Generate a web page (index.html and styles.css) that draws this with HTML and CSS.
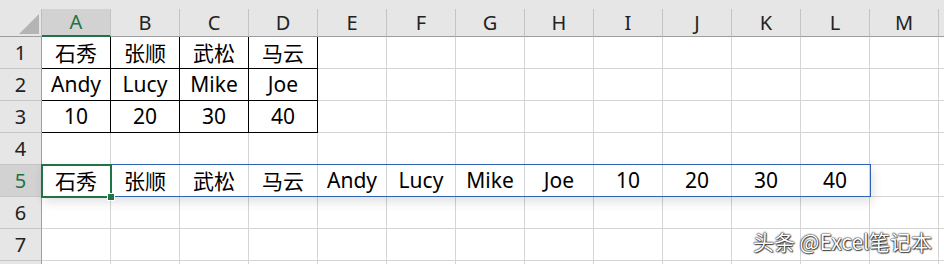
FILE: index.html
```html
<!DOCTYPE html>
<html lang="zh-CN">
<head>
    <meta charset="UTF-8">
    <title>Sheet1</title>
    <link rel="stylesheet" href="styles.css">
</head>
<body>
    <div class="window">
        <div class="sheet">
            <div class="strip"></div>

            <!-- column headers -->
            <div class="corner">
                <svg width="42" height="28" viewBox="0 0 42 28"><polygon points="39,5 39,25 19,25" fill="#b4b4b4"/></svg>
            </div>
            <div class="col-head active">A</div>
            <div class="col-head">B</div>
            <div class="col-head">C</div>
            <div class="col-head">D</div>
            <div class="col-head">E</div>
            <div class="col-head">F</div>
            <div class="col-head">G</div>
            <div class="col-head">H</div>
            <div class="col-head">I</div>
            <div class="col-head">J</div>
            <div class="col-head">K</div>
            <div class="col-head">L</div>
            <div class="col-head">M</div>
            <div class="col-head"></div>

            <!-- row 1 -->
            <div class="row-head">1</div>
            <div class="cell boxed">石秀</div>
            <div class="cell boxed">张顺</div>
            <div class="cell boxed">武松</div>
            <div class="cell boxed">马云</div>
            <div class="cell"></div><div class="cell"></div><div class="cell"></div><div class="cell"></div><div class="cell"></div>
            <div class="cell"></div><div class="cell"></div><div class="cell"></div><div class="cell"></div><div class="cell"></div>

            <!-- row 2 -->
            <div class="row-head">2</div>
            <div class="cell boxed">Andy</div>
            <div class="cell boxed">Lucy</div>
            <div class="cell boxed">Mike</div>
            <div class="cell boxed">Joe</div>
            <div class="cell"></div><div class="cell"></div><div class="cell"></div><div class="cell"></div><div class="cell"></div>
            <div class="cell"></div><div class="cell"></div><div class="cell"></div><div class="cell"></div><div class="cell"></div>

            <!-- row 3 -->
            <div class="row-head">3</div>
            <div class="cell boxed">10</div>
            <div class="cell boxed">20</div>
            <div class="cell boxed">30</div>
            <div class="cell boxed">40</div>
            <div class="cell"></div><div class="cell"></div><div class="cell"></div><div class="cell"></div><div class="cell"></div>
            <div class="cell"></div><div class="cell"></div><div class="cell"></div><div class="cell"></div><div class="cell"></div>

            <!-- row 4 -->
            <div class="row-head">4</div>
            <div class="cell"></div><div class="cell"></div><div class="cell"></div><div class="cell"></div><div class="cell"></div>
            <div class="cell"></div><div class="cell"></div><div class="cell"></div><div class="cell"></div><div class="cell"></div>
            <div class="cell"></div><div class="cell"></div><div class="cell"></div><div class="cell"></div>

            <!-- row 5 (transposed copy) -->
            <div class="row-head active">5</div>
            <div class="cell">石秀</div>
            <div class="cell">张顺</div>
            <div class="cell">武松</div>
            <div class="cell">马云</div>
            <div class="cell">Andy</div>
            <div class="cell">Lucy</div>
            <div class="cell">Mike</div>
            <div class="cell">Joe</div>
            <div class="cell">10</div>
            <div class="cell">20</div>
            <div class="cell">30</div>
            <div class="cell">40</div>
            <div class="cell"></div><div class="cell"></div>

            <!-- row 6 -->
            <div class="row-head">6</div>
            <div class="cell"></div><div class="cell"></div><div class="cell"></div><div class="cell"></div><div class="cell"></div>
            <div class="cell"></div><div class="cell"></div><div class="cell"></div><div class="cell"></div><div class="cell"></div>
            <div class="cell"></div><div class="cell"></div><div class="cell"></div><div class="cell"></div>

            <!-- row 7 -->
            <div class="row-head">7</div>
            <div class="cell"></div><div class="cell"></div><div class="cell"></div><div class="cell"></div><div class="cell"></div>
            <div class="cell"></div><div class="cell"></div><div class="cell"></div><div class="cell"></div><div class="cell"></div>
            <div class="cell"></div><div class="cell"></div><div class="cell"></div><div class="cell"></div>

            <!-- row 8, only its top edge shows -->
            <div class="row-head"></div>
            <div class="cell"></div><div class="cell"></div><div class="cell"></div><div class="cell"></div><div class="cell"></div>
            <div class="cell"></div><div class="cell"></div><div class="cell"></div><div class="cell"></div><div class="cell"></div>
            <div class="cell"></div><div class="cell"></div><div class="cell"></div><div class="cell"></div>

            <!-- overlays: pasted range and active cell -->
            <div class="paste-range"></div>
            <div class="active-cell"><span class="fill-handle"></span></div>
        </div>

        <div class="watermark">头条 @Excel笔记本</div>
    </div>
</body>
</html>
```

FILE: styles.css
```css
/* Page */
body {
    margin: 0;
    background-color: #ffffff;
    overflow: hidden;
    font-family: 'Noto Sans', 'Noto Sans CJK SC', sans-serif;
    color: #000;
}

/* Visible window onto the sheet */
.window {
    position: relative;
    width: 944px;
    height: 264px;
    overflow: hidden;
}

/* Worksheet grid */
.sheet {
    position: relative;
    display: grid;
    grid-template-columns: 42px repeat(14, 69px);
    grid-template-rows: 9px 28px repeat(8, 32px);
    width: 1008px;
}

.strip {
    grid-column: 1 / -1;
    background-color: #e6e6e6;
}

/* Headers */
.corner {
    background-color: #e6e6e6;
    border-right: 1px solid #bdbdbd;
    border-bottom: 1px solid #9d9d9d;
    box-sizing: border-box;
    line-height: 0;
}

.col-head {
    background-color: #e6e6e6;
    border-right: 1px solid #c4c4c4;
    border-bottom: 1px solid #9d9d9d;
    box-sizing: border-box;
    display: flex;
    align-items: center;
    justify-content: center;
    font-size: 20px;
    color: #222;
    padding-bottom: 1px;
}

.col-head.active {
    background-color: #d2d2d2;
    color: #217346;
    border-bottom: 2px solid #217346;
}

.row-head {
    background-color: #e6e6e6;
    border-right: 1px solid #9d9d9d;
    border-bottom: 1px solid #c4c4c4;
    box-sizing: border-box;
    display: flex;
    align-items: center;
    justify-content: center;
    font-size: 20px;
    color: #222;
}

.row-head.active {
    background-color: #d2d2d2;
    color: #217346;
}

/* Cells */
.cell {
    border-right: 1px solid #d4d4d4;
    border-bottom: 1px solid #d4d4d4;
    box-sizing: border-box;
    display: flex;
    align-items: center;
    justify-content: center;
    font-size: 21px;
    white-space: nowrap;
    padding-bottom: 2px;
}

.cell.boxed {
    border-right-color: #000;
    border-bottom-color: #000;
}

/* Pasted range outline (A5:L5) */
.paste-range {
    position: absolute;
    left: 41px;
    top: 164px;
    width: 830px;
    height: 33px;
    border: 1px solid #2f62b5;
    box-sizing: border-box;
    box-shadow: 2px 5px 10px rgba(0, 0, 0, 0.12);
}

/* Active cell A5 */
.active-cell {
    position: absolute;
    left: 41px;
    top: 164px;
    width: 71px;
    height: 34px;
    border: 2px solid #217346;
    box-sizing: border-box;
}

.fill-handle {
    position: absolute;
    right: -5px;
    bottom: -5px;
    width: 6px;
    height: 6px;
    background-color: #217346;
    border: 1px solid #fff;
}

/* Watermark */
.watermark {
    position: absolute;
    right: 12px;
    top: 226px;
    font-family: 'Noto Sans CJK SC', sans-serif;
    font-size: 21px;
    line-height: 30px;
    color: #fff;
    text-shadow: 0 0 1px #000, 0 0 2px #000, 1px 1px 1px rgba(0, 0, 0, 0.6);
    white-space: nowrap;
}
```
